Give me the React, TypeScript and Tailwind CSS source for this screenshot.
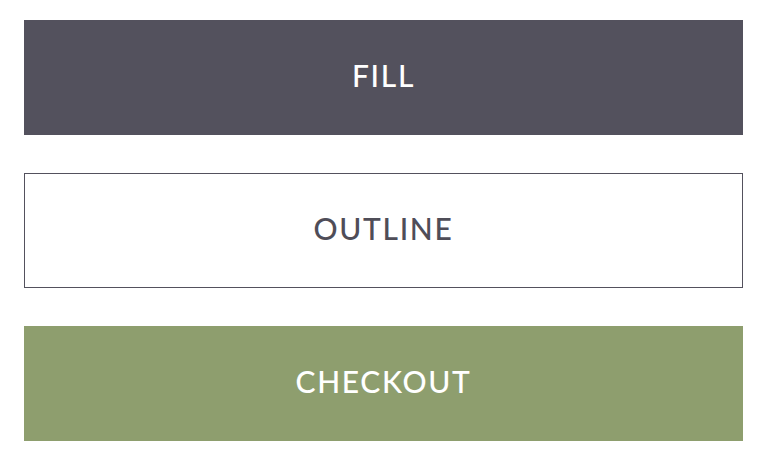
import React from 'react';

// ボタンのバリエーション
const buttons = [
  { label: 'FILL', className: 'bg-[#53515d] text-white border border-[#53515d]' },
  { label: 'OUTLINE', className: 'bg-white text-[#4f4d58] border border-[#53515d]' },
  { label: 'CHECKOUT', className: 'bg-[#8e9e6e] text-white border border-[#8e9e6e]' },
];

export default function App() {
  return (
    <div className="min-h-[458px] w-[766px] bg-white pt-5 pl-6 font-['Lato','Noto_Sans',sans-serif]">
      <div className="flex w-[719px] flex-col gap-[38px]">
        {buttons.map((b) => (
          <button
            key={b.label}
            className={`flex h-[115px] w-full items-center justify-center pb-1 text-[30px] font-medium tracking-[0.055em] ${b.className}`}
          >
            {b.label}
          </button>
        ))}
      </div>
    </div>
  );
}
